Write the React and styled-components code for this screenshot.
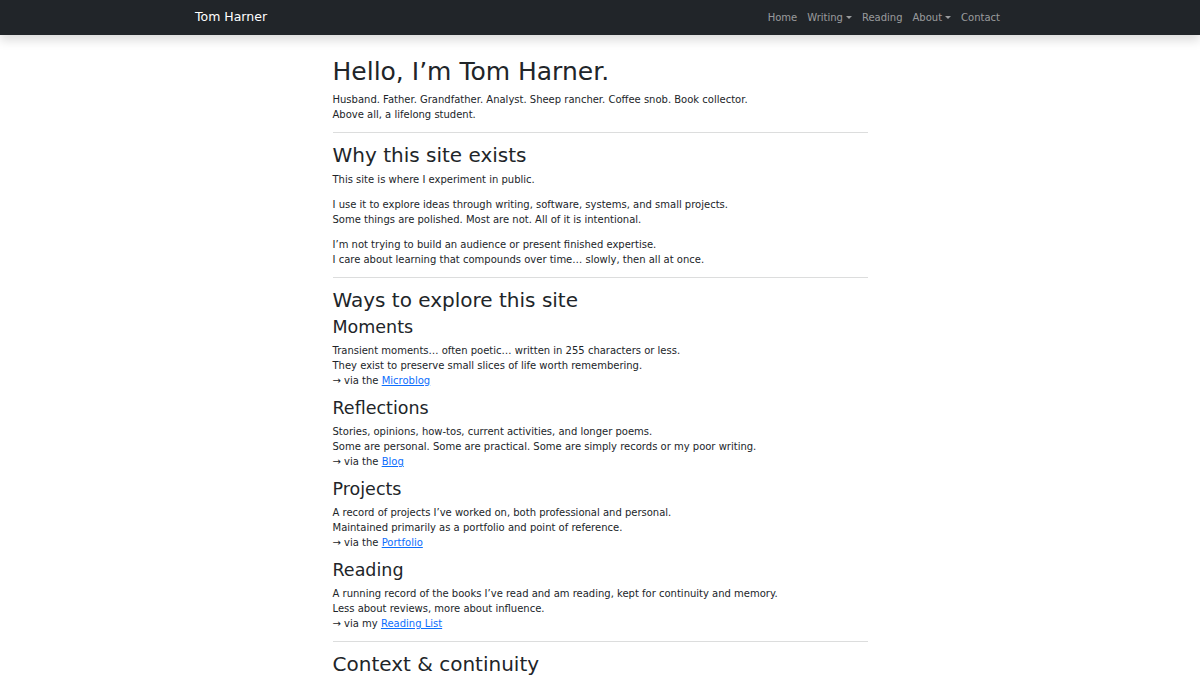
import React from 'react'
import styled, { createGlobalStyle } from 'styled-components'

const GlobalStyle = createGlobalStyle`
    body {
        margin: 0;
        font-family: "DejaVu Sans", "Liberation Sans", sans-serif;
        font-size: 10px;
        line-height: 1.5;
        color: #212529;
        background: #fff;
    }
`

const sections = [
    {
        title: 'Moments',
        lines: [
            'Transient moments… often poetic… written in 255 characters or less.',
            'They exist to preserve small slices of life worth remembering.',
        ],
        via: 'the',
        link: 'Microblog',
    },
    {
        title: 'Reflections',
        lines: [
            'Stories, opinions, how-tos, current activities, and longer poems.',
            'Some are personal. Some are practical. Some are simply records or my poor writing.',
        ],
        via: 'the',
        link: 'Blog',
    },
    {
        title: 'Projects',
        lines: [
            'A record of projects I’ve worked on, both professional and personal.',
            'Maintained primarily as a portfolio and point of reference.',
        ],
        via: 'the',
        link: 'Portfolio',
    },
    {
        title: 'Reading',
        lines: [
            'A running record of the books I’ve read and am reading, kept for continuity and memory.',
            'Less about reviews, more about influence.',
        ],
        via: 'my',
        link: 'Reading List',
    },
]

function Navbar() {
    return (
        <NavBar>
            <NavInner>
                <Brand href="#">Tom Harner</Brand>
                <NavList>
                    <NavLink href="#">Home</NavLink>
                    <NavLink href="#" dropdown>Writing</NavLink>
                    <NavLink href="#">Reading</NavLink>
                    <NavLink href="#" dropdown>About</NavLink>
                    <NavLink href="#">Contact</NavLink>
                </NavList>
            </NavInner>
        </NavBar>
    )
}

export default function App() {
    return (
        <>
            <GlobalStyle />
            <Navbar />
            <Main>
                <H1>Hello, I’m Tom Harner.</H1>
                <P>
                    Husband. Father. Grandfather. Analyst. Sheep rancher. Coffee snob. Book collector.<br />
                    Above all, a lifelong student.
                </P>
                <Rule />
                <H2>Why this site exists</H2>
                <P>This site is where I experiment in public.</P>
                <P>
                    I use it to explore ideas through writing, software, systems, and small projects.<br />
                    Some things are polished. Most are not. All of it is intentional.
                </P>
                <P>
                    I’m not trying to build an audience or present finished expertise.<br />
                    I care about learning that compounds over time… slowly, then all at once.
                </P>
                <Rule />
                <H2>Ways to explore this site</H2>
                {sections.map(s => (
                    <div key={s.title}>
                        <H3>{s.title}</H3>
                        <P>
                            {s.lines[0]}<br />
                            {s.lines[1]}<br />
                            → via {s.via} <Link href="#">{s.link}</Link>
                        </P>
                    </div>
                ))}
                <Rule />
                <H2>Context &amp; continuity</H2>
            </Main>
        </>
    )
}

const NavBar = styled.nav`
    background: #212529;
    box-shadow: 0 5px 10px rgba(0, 0, 0, 0.15);
    padding: 5px 0;
    position: relative;
`

const NavInner = styled.div`
    width: 810px;
    margin: 0 auto;
    display: flex;
    align-items: center;
    justify-content: space-between;
`

const Brand = styled.a`
    color: #fff;
    text-decoration: none;
    font-size: 12.5px;
    line-height: 1.5;
    padding: 3px 0;
`

const NavList = styled.div`
    display: flex;
    align-items: center;
`

const NavLink = styled.a`
    color: rgba(255, 255, 255, 0.55);
    text-decoration: none;
    font-size: 10px;
    line-height: 15px;
    padding: 5px;
    display: flex;
    align-items: center;

    &::after {
        content: ${props => (props.dropdown ? '""' : 'none')};
        display: inline-block;
        margin-left: 3px;
        border-top: 3px solid;
        border-left: 3px solid transparent;
        border-right: 3px solid transparent;
        border-bottom: 0;
    }
`

const Main = styled.main`
    width: 535px;
    margin: 0 auto;
    padding-top: 22px;
    padding-bottom: 40px;
`

const H1 = styled.h1`
    font-size: 25px;
    font-weight: 500;
    line-height: 1.2;
    margin: 0 0 5px;
`

const H2 = styled.h2`
    font-size: 20px;
    font-weight: 500;
    line-height: 1.2;
    margin: 0 0 5px;
`

const H3 = styled.h3`
    font-size: 17.5px;
    font-weight: 500;
    line-height: 1.2;
    margin: 0 0 5px;
`

const P = styled.p`
    margin: 0 0 10px;
`

const Link = styled.a`
    color: #0d6efd;
    text-decoration: underline;
`

const Rule = styled.hr`
    margin: 10px 0;
    border: 0;
    border-top: 1px solid #dcdddd;
`
